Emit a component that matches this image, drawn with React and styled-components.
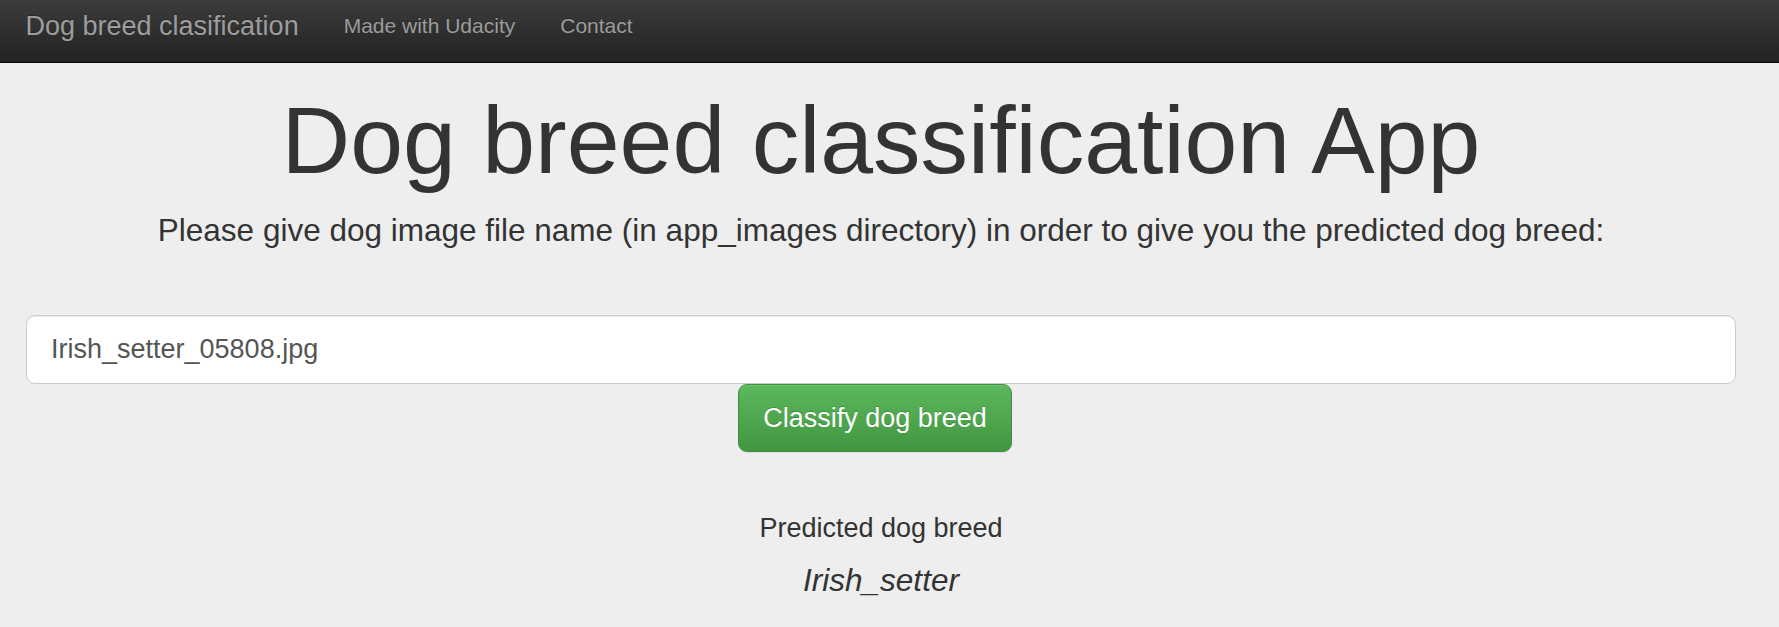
import React from "react";
import styled, { createGlobalStyle } from "styled-components";

const GlobalStyle = createGlobalStyle`
  html, body {
    margin: 0;
    padding: 0;
    background: #eeeeee;
  }
  body {
    font-family: "Liberation Sans", Arial, Helvetica, sans-serif;
    color: #333333;
  }
  * {
    box-sizing: border-box;
  }
`;

const Navbar = styled.nav`
  height: 63px;
  display: flex;
  align-items: flex-start;
  padding: 11px 0 0 3px;
  background: linear-gradient(to bottom, #3c3c3c 0%, #222222 100%);
  border-bottom: 1px solid #080808;
`;

const Brand = styled.a`
  padding: 0 22.5px;
  font-size: 27px;
  line-height: 30px;
  color: #9d9d9d;
  text-decoration: none;
  text-shadow: 0 -1px 0 rgba(0, 0, 0, 0.25);
`;

const NavLinks = styled.ul`
  display: flex;
  margin: 0;
  padding: 0;
  list-style: none;
`;

const NavLink = styled.a`
  display: block;
  padding: 0 22.5px;
  font-size: 21px;
  line-height: 30px;
  color: #9d9d9d;
  text-decoration: none;
  text-shadow: 0 -1px 0 rgba(0, 0, 0, 0.25);
`;

const Jumbotron = styled.main`
  width: 1762px;
  padding: 0 26px;
  display: flex;
  flex-direction: column;
  align-items: center;
  text-align: center;
`;

const Title = styled.h1`
  margin: 25px 0 0;
  font-size: 95px;
  font-weight: 500;
  line-height: 104px;
  color: #333333;
`;

const Lead = styled.p`
  margin: 16px 0 0;
  font-size: 31.5px;
  line-height: 45px;
`;

const Form = styled.form`
  width: 100%;
  margin-top: 62px;
  display: flex;
  flex-direction: column;
  align-items: center;
`;

const Input = styled.input`
  width: 100%;
  height: 69px;
  padding: 15px 24px;
  font-family: inherit;
  font-size: 27px;
  color: #555555;
  background: #ffffff;
  border: 1px solid #cccccc;
  border-radius: 9px;
  box-shadow: inset 0 1px 1px rgba(0, 0, 0, 0.075);
  outline: none;
`;

const Button = styled.button`
  height: 68px;
  margin-right: 12px;
  padding: 15px 24px;
  font-family: inherit;
  font-size: 27px;
  line-height: 36px;
  color: #ffffff;
  background: linear-gradient(to bottom, #5cb85c 0%, #419641 100%);
  border: 1px solid #3e8f3e;
  border-radius: 9px;
  text-shadow: 0 -1px 0 rgba(0, 0, 0, 0.2);
  box-shadow: inset 0 1px 0 rgba(255, 255, 255, 0.15), 0 1px 1px rgba(0, 0, 0, 0.075);
  cursor: pointer;
`;

const Result = styled.section`
  margin-top: 57px;
  display: flex;
  flex-direction: column;
  align-items: center;
`;

const ResultLabel = styled.p`
  margin: 0;
  font-size: 27px;
  line-height: 39px;
`;

const ResultValue = styled.h3`
  margin: 15px 0 0;
  font-size: 31.5px;
  font-weight: 500;
  font-style: italic;
  line-height: 35px;
`;

export default function App() {
  return (
    <>
      <GlobalStyle />
      <Navbar>
        <Brand href="#">Dog breed clasification</Brand>
        <NavLinks>
          <li>
            <NavLink href="#">Made with Udacity</NavLink>
          </li>
          <li>
            <NavLink href="#">Contact</NavLink>
          </li>
        </NavLinks>
      </Navbar>
      <Jumbotron>
        <Title>Dog breed classification App</Title>
        <Lead>
          Please give dog image file name (in app_images directory) in order to give you the
          predicted dog breed:
        </Lead>
        <Form onSubmit={e => e.preventDefault()}>
          <Input type="text" defaultValue="Irish_setter_05808.jpg" />
          <Button type="submit">Classify dog breed</Button>
        </Form>
        <Result>
          <ResultLabel>Predicted dog breed</ResultLabel>
          <ResultValue>Irish_setter</ResultValue>
        </Result>
      </Jumbotron>
    </>
  );
}
